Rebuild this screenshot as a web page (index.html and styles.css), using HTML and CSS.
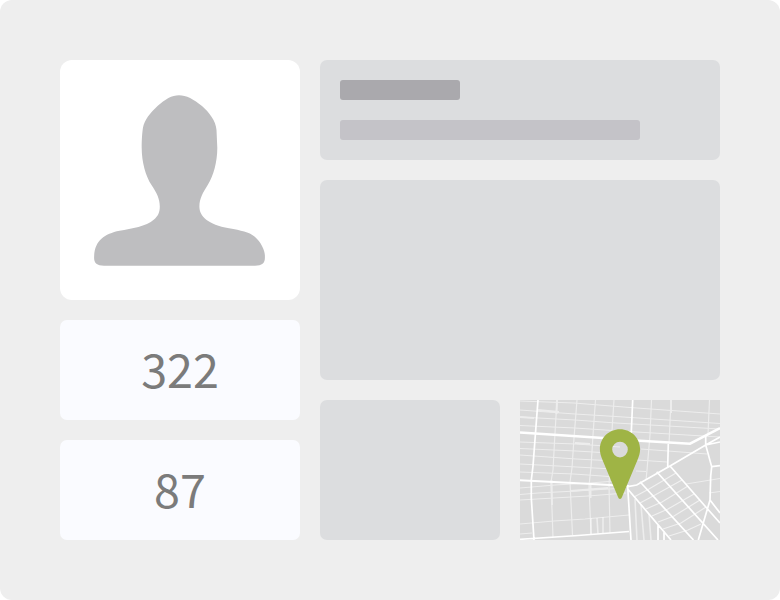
FILE: index.html
```
<!DOCTYPE html>
<html lang="en">
<head>
<meta charset="utf-8">
<title>Profile overview</title>
<link rel="stylesheet" href="styles.css">
</head>
<body>
<main class="dashboard">
  <aside class="sidebar">
    <section class="avatar">
      <svg viewBox="0 0 240 240" aria-hidden="true"><path d="M119 35.200C126 35.200 134 39.200 142 46C149 52.200 156 61 156.500 70L157.300 88C157.300 102 153.500 115.500 148 124.500C143 132.500 139.400 138.500 139.400 146.500C139.400 156.500 148 164.500 169 168.300C181 170.500 189 172 194.500 176.500C201 182 204.900 190.500 204.900 195.500V198C204.900 203 202 205.700 195 205.700H44C37 205.700 34.100 203 34.100 198C34.100 181 44 174 59.500 170.800C72 168.500 86 166.500 94 159.500C98 156 99.800 152.500 99.800 146.500C99.800 138.500 96.500 132.500 91.500 125C85.500 116 81.700 101.500 81.700 88C81.700 79 82.200 73 83 67.500C84.500 60 90 53 97.500 46C105 39.200 112 35.200 119 35.200Z"/></svg>
    </section>
    <section class="stat">322</section>
    <section class="stat">87</section>
  </aside>
  <div class="content">
    <section class="panel heading"><div class="title-bar"></div><div class="subtitle-bar"></div></section>
    <section class="panel"></section>
    <div class="bottom">
      <section class="panel"></section>
      <section class="map">
        <svg viewBox="0 0 200 140" aria-hidden="true">
          <g class="street">
            <path d="M0 1L54 3L110 7.500L200 14M0 10L55 14L96 16.500L200 23.500M0 17L55 20L96 23L200 29M0 25.500L55 28L100 31L200 37M0 42L56 44L100 47M0 48.500L56 51L90 53M121 49L148 51L187 54M0 55L56 59L96 61M117 60L147 62M0 64L38 66L93 69M0 72L54 74L96 77M116 71L126 71.500"/>
            <path d="M37 0L35 33L33 70L31 82L33 137M57 0L54 38L52 68L50 82L52.500 135M75.500 0L73 35L71 67L69 86L71 134M94 0L91.500 38L89 85L90 133M131.500 0L130 35L127 70L126 80M151 0L149 44M189.500 0L188 34"/>
            <path d="M0 88L35 85L70 83L95 81M0 94.500L18 93L56 91L106 88M0 100L34 98L68 96L106 93M0 124L34 121L65 119L109 115M0 134L12 133M166 84L200 78.500M189 93L200 91.500"/>
            <path class="soft" d="M37 0L36.500 14M31.500 80L32 105M151 0V13M70.500 85V98M0 17L14 18M18 10L39 12M55 43L70 44M50 91L88 88"/>
          </g>
          <g class="lane">
            <path d="M71 118V134M77 118L78 134M83 117V133M115 99L117 140M121 105L124 140M129 114L131 140"/>
          </g>
          <g class="block">
            <path d="M114 97L129 89L156 73M120 103L135 95L162 80M126 109L142 102L168 86M132 116L148 109L174 94M138 122L154 116L180 100M143 129L161 123L186 107M149 136L168 130L181 124"/>
          </g>
          <g class="avenue">
            <path d="M18 0L13 66L11.300 80V98L14 140M112.700 0L111 39M0 139.300L58 135.500L109 131.500M107.700 86.700L111 140M107.700 89L151 140M120 81.700L173.500 140M136.700 71.700L198 140M150 66L186.700 108L200 123M107.700 86.700L116.700 85L150 66L185.700 45L200 37M148.300 44L147.700 67M185.700 35V45L191.700 66.700L190.700 76L190 100L178.300 140M190 100L200 113M191.700 66.700L200 65.700M185.700 45L200 42M138 125V140M144 131V140"/>
          </g>
          <path class="highway" d="M0 32.500L83 38L120 40.800L170 43.700L200 28"/>
          <path class="arterial" d="M0 80.300L53 83L109 86"/>
          <path class="pin" fill-rule="evenodd" d="M100 29.300C88.700 29.300 79.900 38.200 79.900 49.300C79.900 53.200 81 56.500 82.500 60L98 97C98.800 99.500 101.200 99.500 102 97L117.500 60C119 56.500 120.100 53.200 120.100 49.300C120.100 38.200 111.300 29.300 100 29.300ZM100 41.800A7.800 7.800 0 1 1 100 57.400A7.800 7.800 0 1 1 100 41.800Z"/>
        </svg>
      </section>
    </div>
  </div>
</main>
</body>
</html>
```
FILE: styles.css
```
* { box-sizing: border-box; }
body { margin: 0; background: #fff; }
.dashboard {
  display: grid;
  grid-template-columns: 240px 400px;
  gap: 20px;
  width: 780px;
  height: 600px;
  padding: 60px;
  border-radius: 12px;
  background: #eee;
}
.sidebar { display: grid; grid-template-rows: 240px 100px 100px; gap: 20px; }
.avatar { border-radius: 12px; background: #fff; }
.avatar svg, .map svg { display: block; width: 100%; height: 100%; }
.avatar path { fill: #bebec0; }
.stat {
  display: flex;
  align-items: center;
  justify-content: center;
  height: 100px;
  padding-bottom: 4px;
  border-radius: 7px;
  background: #fafbff;
  color: #7b7b7b;
  font: 46.7px/96px "Noto Sans CJK SC", sans-serif;
}
.content { display: grid; grid-template-rows: 100px 200px 140px; gap: 20px; }
.panel { border-radius: 7px; background: #dcdddf; }
.heading { display: flex; flex-direction: column; gap: 20px; padding: 20px; }
.title-bar { width: 120px; height: 20px; border-radius: 3px; background: #aaa9ad; }
.subtitle-bar { width: 300px; height: 20px; border-radius: 3px; background: #c4c3c8; }
.bottom { display: grid; grid-template-columns: 180px 200px; gap: 20px; }
.map { overflow: hidden; background: #dadada; }
.map g, .highway, .arterial { fill: none; stroke: #fff; }
.street { stroke-width: 1.2; opacity: .52; }
.street .soft { stroke-width: 2; }
.lane { stroke-width: 1.6; opacity: .5; }
.block { stroke-width: 1.2; opacity: .6; }
.avenue { stroke-width: 1.7; }
.highway { stroke-width: 2.5; }
.arterial { stroke-width: 2; }
.pin { fill: #9fb445; }
```
